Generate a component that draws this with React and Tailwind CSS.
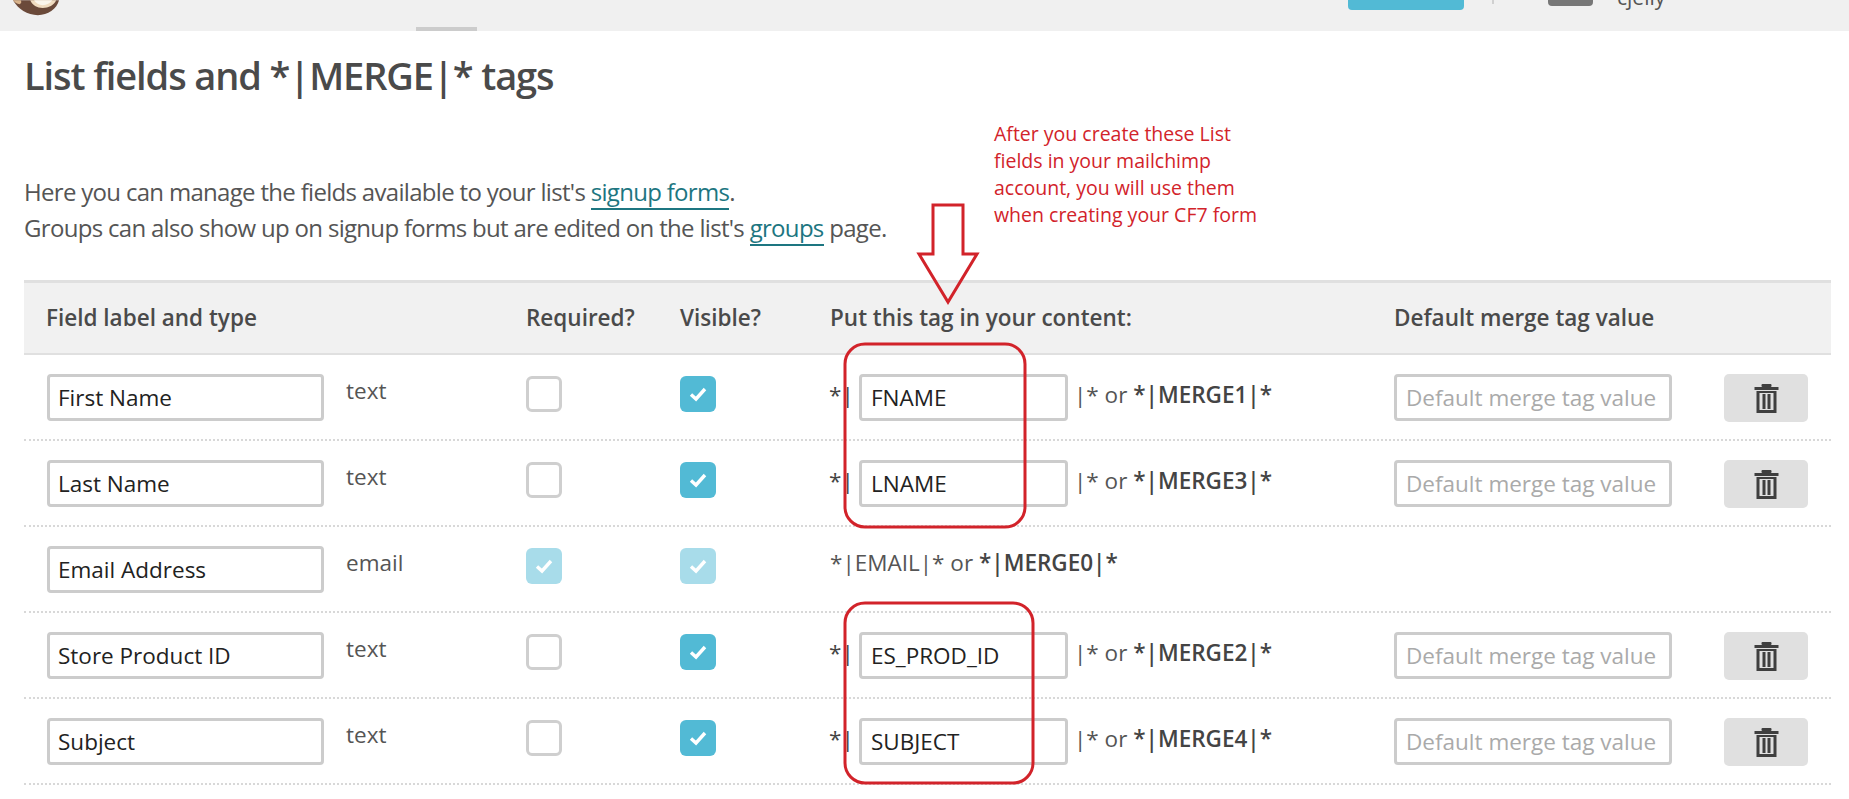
import React from 'react';

const rows = [
    { label: 'First Name', type: 'text', tag: 'FNAME', merge: 'MERGE1' },
    { label: 'Last Name', type: 'text', tag: 'LNAME', merge: 'MERGE3' },
    { label: 'Email Address', type: 'email', merge: 'MERGE0', locked: true },
    { label: 'Store Product ID', type: 'text', tag: 'ES_PROD_ID', merge: 'MERGE2' },
    { label: 'Subject', type: 'text', tag: 'SUBJECT', merge: 'MERGE4' },
];

const gridCols = 'grid grid-cols-[299px_180px_154px_151px_563px_330px_84px]';

const CheckMark = () => (
    <svg width="20" height="18" viewBox="0 0 20 18" fill="none">
        <path d="M3 9.5 L8 14 L17 4" stroke="#ffffff" strokeWidth="3.4" />
    </svg>
);

const Checkbox = ({ checked, faded }) => {
    if (!checked) {
        return <div className="w-[36px] h-[36px] mt-[2px] rounded-[6px] border-[3px] border-[#cfcfcf] bg-white" />;
    }
    return (
        <div className={`w-[36px] h-[36px] mt-[2px] rounded-[6px] flex items-center justify-center ${faded ? 'bg-[#a8dcea]' : 'bg-[#52bad5]'}`}>
            <CheckMark />
        </div>
    );
};

const TrashIcon = () => (
    <svg width="25" height="30" viewBox="0 0 24 30" fill="#3f3f3f">
        <rect x="0" y="4" width="24" height="3" />
        <rect x="7" y="1" width="10" height="3" rx="1" />
        <path fillRule="evenodd" d="M2 8h20v22H2z M5 10v17h14V10z" />
        <rect x="8" y="11" width="3" height="15" />
        <rect x="13" y="11" width="3" height="15" />
    </svg>
);

const TextBox = ({ value, placeholder, className }) => (
    <div className={`h-[47px] rounded-[4px] border-[3px] border-[#cccccc] bg-white flex items-center text-[22.5px] whitespace-nowrap overflow-hidden ${placeholder ? 'text-[#aaaaaa]' : 'text-[#222222]'} ${className}`}>
        {value || placeholder}
    </div>
);

const MergeTag = ({ merge }) => (
    <span>or <span className="font-semibold text-[#444444]">*|{merge}|*</span></span>
);

const FieldRow = ({ row }) => (
    <div className={`${gridCols} h-[86px] pl-[23px] pt-[19px] border-b-2 border-dotted border-[#d8d8d8] box-border`}>
        <TextBox value={row.label} className="w-[277px] pl-[8px]" />
        <div className="leading-[36px] -mt-[1px] text-[#555555]">{row.type}</div>
        <Checkbox checked={row.locked} faded={row.locked} />
        <Checkbox checked faded={row.locked} />
        {row.locked ? (
            <div className="leading-[36px] -mt-[1px] -ml-[1px] text-[#555555]">*|EMAIL|* <MergeTag merge={row.merge} /></div>
        ) : (
            <div className="flex items-start leading-[36px] -ml-[2px] text-[#555555]">
                <span className="mt-[3px] w-[30px] font-medium text-[#444444]">*|</span>
                <TextBox value={row.tag} className="w-[209px] pl-[9px]" />
                <span className="mt-[3px] ml-[6px] whitespace-nowrap">|* <MergeTag merge={row.merge} /></span>
            </div>
        )}
        {!row.locked && <TextBox placeholder="Default merge tag value" className="w-[278px] pl-[9px]" />}
        {!row.locked && (
            <button className="col-start-7 w-[84px] h-[48px] rounded-[5px] bg-[#e0e0e0] flex items-center justify-center">
                <TrashIcon />
            </button>
        )}
    </div>
);

const App = () => {
    return (
        <div className="relative w-[1849px] h-[799px] overflow-hidden bg-white text-[22.5px] text-[#555555] font-['Open_Sans',sans-serif]">
            <header className="relative h-[31px] bg-[#f0f0f0] flex items-start overflow-hidden">
                <svg className="ml-[13px] shrink-0" width="46" height="16" viewBox="0 0 48 16">
                    <path d="M0 0 H48 C46 9 36 15.5 26 15.5 C15 15.5 5 9 0 0 Z" fill="#6b4a3a" />
                    <path d="M18 0 H45 C43 5 37 8 31 8 C25 8 20 5 18 0 Z" fill="#f0dcc0" />
                    <path d="M22 0 H41 C39 3 35 5 31 5 C27 5 24 3 22 0 Z" fill="#fbf6ec" />
                    <path d="M0 0 H8 C9 2 9 3 7 4 C4 4 2 2 0 0 Z" fill="#d9b48c" />
                </svg>
                <div className="absolute left-[416px] bottom-0 w-[61px] h-[4px] bg-[#cccccc]" />
                <div className="ml-[1289px] w-[116px] h-[10px] rounded-b-[4px] bg-[#52bad5] shrink-0" />
                <div className="ml-[28px] w-[2px] h-[4px] bg-[#d0d0d0] shrink-0" />
                <div className="ml-[54px] w-[45px] h-[6px] rounded-b-[4px] bg-[#777777] shrink-0" />
                <div className="ml-[24px] mt-[-18px] leading-[30px] text-[21px] text-[#555555]">cjelly</div>
            </header>

            <main>
                <h1 className="pl-[24px] pt-[17px] h-[143px] text-[38px] tracking-[-1.1px] leading-[54px] font-semibold text-[#4a4a4a]">
                    List fields and *|MERGE|* tags
                </h1>
                <p className="pl-[24px] leading-[36px] h-[106px] text-[24px] tracking-[-0.69px]">
                    Here you can manage the fields available to your list's{' '}
                    <a className="text-[#1d7681] border-b-2 border-[#1d7681]">signup forms</a>.<br />
                    Groups can also show up on signup forms but are edited on the list's{' '}
                    <a className="text-[#1d7681] border-b-2 border-[#1d7681]">groups</a> page.
                </p>

                <div className="ml-[24px] w-[1807px]">
                    <div className={`${gridCols} h-[75px] box-border items-center pl-[23px] bg-[#f1f1f1] border-t-[3px] border-b-2 border-[#e0e0e0] font-semibold text-[#4a4a4a] text-[22.5px]`}>
                        <div className="col-span-2 -ml-[1px] -mt-[1px]">Field label and type</div>
                        <div className="-mt-[1px]">Required?</div>
                        <div className="-mt-[1px]">Visible?</div>
                        <div className="-ml-[1px] -mt-[1px]">Put this tag in your content:</div>
                        <div className="-mt-[1px]">Default merge tag value</div>
                    </div>
                    {rows.map((row) => (
                        <FieldRow key={row.label} row={row} />
                    ))}
                </div>
            </main>

            {/* red annotation drawn on top of the screenshot */}
            <svg className="absolute left-0 top-0 pointer-events-none" width="1849" height="799" fill="none" stroke="#d2232a" strokeWidth="3">
                <path d="M933 205 H963 V254 H977 L948 302 L919 254 H933 Z" />
                <rect x="845" y="344" width="180" height="183" rx="20" />
                <rect x="845" y="603" width="188" height="180" rx="20" />
            </svg>
            <div className="absolute left-[994px] top-[120px] text-[19.5px] leading-[27px] text-[#d2232a]">
                After you create these List<br />
                fields in your mailchimp<br />
                account, you will use them<br />
                when creating your CF7 form
            </div>
        </div>
    );
};

export default App;
